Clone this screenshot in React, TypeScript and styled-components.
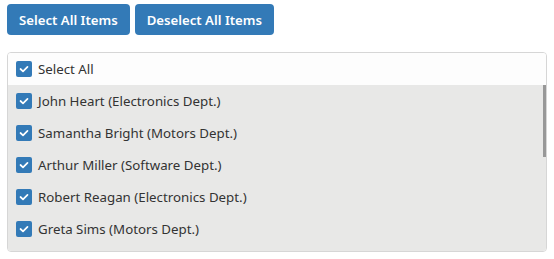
import React from "react";
import styled, { createGlobalStyle } from "styled-components";

const Global = createGlobalStyle`
  html, body { margin: 0; padding: 0; background: #fff; }
  body { font-family: "Noto Sans", "Open Sans", sans-serif; color: #333; }
`;

const Page = styled.div`
  padding: 4px 7px 0 7px;
  display: flex;
  flex-direction: column;
  gap: 17px;
  width: 540px;
`;

const Toolbar = styled.div`
  display: flex;
  gap: 5px;
`;

const Button = styled.button`
  height: 31px;
  padding: 0 12px;
  border: none;
  border-radius: 4px;
  background: #337ab7;
  color: #fff;
  font-family: "Noto Sans", sans-serif;
  font-weight: 600;
  font-size: 13.2px;
  cursor: pointer;
`;

const List = styled.div`
  border: 1px solid #d6d6d6;
  border-radius: 4px;
  overflow: hidden;
  display: flex;
  flex-direction: column;
  height: 200px;
  box-sizing: border-box;
`;

const Header = styled.div`
  background: #fdfdfd;
`;

const Items = styled.div`
  position: relative;
  flex: 1;
  background: #e8e8e7;
  overflow: hidden;
`;

const Row = styled.label`
  display: flex;
  align-items: center;
  gap: 6px;
  height: 32px;
  padding-left: 8px;
  font-size: 13.3px;
  color: #333;
`;

const Box = styled.span`
  width: 16px;
  height: 16px;
  border-radius: 2px;
  background: #337ab7;
  display: flex;
  align-items: center;
  justify-content: center;
  flex-shrink: 0;
`;

const Scrollbar = styled.div`
  position: absolute;
  right: 0;
  top: 0;
  width: 3px;
  height: 72px;
  background: #989898;
`;

const Check = () => (
  <Box>
    <svg width="10" height="8" viewBox="0 0 10 8">
      <path d="M1.5 4 L4 6.3 L8.5 1.8" fill="none" stroke="#fff" strokeWidth="1.7" strokeLinecap="round" strokeLinejoin="round" />
    </svg>
  </Box>
);

const people = [
  "John Heart (Electronics Dept.)",
  "Samantha Bright (Motors Dept.)",
  "Arthur Miller (Software Dept.)",
  "Robert Reagan (Electronics Dept.)",
  "Greta Sims (Motors Dept.)",
];

export default function App() {
  return (
    <>
      <Global />
      <Page>
        <Toolbar>
          <Button>Select All Items</Button>
          <Button>Deselect All Items</Button>
        </Toolbar>
        <List>
          <Header>
            <Row>
              <Check />
              Select All
            </Row>
          </Header>
          <Items>
            {people.map((p) => (
              <Row key={p}>
                <Check />
                {p}
              </Row>
            ))}
            <Scrollbar />
          </Items>
        </List>
      </Page>
    </>
  );
}
